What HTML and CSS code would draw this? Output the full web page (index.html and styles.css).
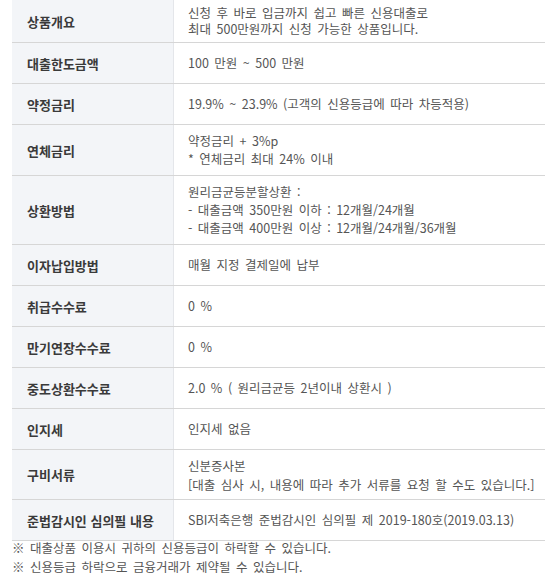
FILE: index.html
```html
<!DOCTYPE html>
<html lang="ko">
<head>
<meta charset="utf-8">
<link rel="stylesheet" href="styles.css">
</head>
<body>
<div class="page">
  <div class="spec">
    <div class="row first">
      <div class="label">상품개요</div>
      <div class="value">신청 후 바로 입금까지 쉽고 빠른 신용대출로<br>최대 500만원까지 신청 가능한 상품입니다.</div>
    </div>
    <div class="row">
      <div class="label">대출한도금액</div>
      <div class="value">100 만원 ~ 500 만원</div>
    </div>
    <div class="row">
      <div class="label">약정금리</div>
      <div class="value">19.9% ~ 23.9% (고객의 신용등급에 따라 차등적용)</div>
    </div>
    <div class="row">
      <div class="label">연체금리</div>
      <div class="value">약정금리 + 3%p<br>* 연체금리 최대 24% 이내</div>
    </div>
    <div class="row">
      <div class="label">상환방법</div>
      <div class="value">원리금균등분할상환 :<br>- 대출금액 350만원 이하 : 12개월/24개월<br>- 대출금액 400만원 이상 : 12개월/24개월/36개월</div>
    </div>
    <div class="row">
      <div class="label">이자납입방법</div>
      <div class="value">매월 지정 결제일에 납부</div>
    </div>
    <div class="row">
      <div class="label">취급수수료</div>
      <div class="value">0 %</div>
    </div>
    <div class="row">
      <div class="label">만기연장수수료</div>
      <div class="value">0 %</div>
    </div>
    <div class="row">
      <div class="label">중도상환수수료</div>
      <div class="value">2.0 % ( 원리금균등 2년이내 상환시 )</div>
    </div>
    <div class="row">
      <div class="label">인지세</div>
      <div class="value">인지세 없음</div>
    </div>
    <div class="row docs">
      <div class="label">구비서류</div>
      <div class="value">신분증사본<br>[대출 심사 시, 내용에 따라 추가 서류를 요청 할 수도 있습니다.]</div>
    </div>
    <div class="row">
      <div class="label">준법감시인 심의필 내용</div>
      <div class="value">SBI저축은행 준법감시인 심의필 제 2019-180호(2019.03.13)</div>
    </div>
  </div>
  <div class="notes">
    <p>※ 대출상품 이용시 귀하의 신용등급이 하락할 수 있습니다.</p>
    <p>※ 신용등급 하락으로 금융거래가 제약될 수 있습니다.</p>
  </div>
</div>
</body>
</html>
```

FILE: styles.css
```css
* {
  box-sizing: border-box;
}

html, body {
  margin: 0;
  padding: 0;
  background: #ffffff;
}

body {
  font-family: "Noto Sans CJK KR", sans-serif;
  font-size: 12.5px;
  color: #555555;
}

.page {
  padding-left: 12px;
}

.spec {
  width: 533px;
  display: flex;
  flex-direction: column;
}

.row {
  display: flex;
  min-height: 41px;
  border-bottom: 1px solid #d6d6d6;
}

.label {
  flex: 0 0 162px;
  display: flex;
  align-items: center;
  padding-left: 15px;
  background: #f3f5f8;
  border-right: 1px solid #e4e6ea;
  font-weight: 700;
  font-size: 13px;
  color: #3a3a3a;
}

.value {
  flex: 1;
  display: flex;
  flex-direction: column;
  justify-content: center;
  align-items: flex-start;
  padding: 7px 6px 7px 14px;
  line-height: 18px;
  word-spacing: 2px;
  white-space: nowrap;
  color: #555555;
}

.row.first {
  min-height: 43px;
}

.row.first .value {
  display: block;
  padding-top: 5px;
  padding-bottom: 5px;
  line-height: 16px;
}

.row.docs .value {
  padding-top: 6px;
  padding-bottom: 5px;
  line-height: 19px;
}

.notes {
  margin-top: -3px;
  color: #555555;
  word-spacing: 2px;
}

.notes p {
  margin: 0;
  line-height: 19px;
}
```
